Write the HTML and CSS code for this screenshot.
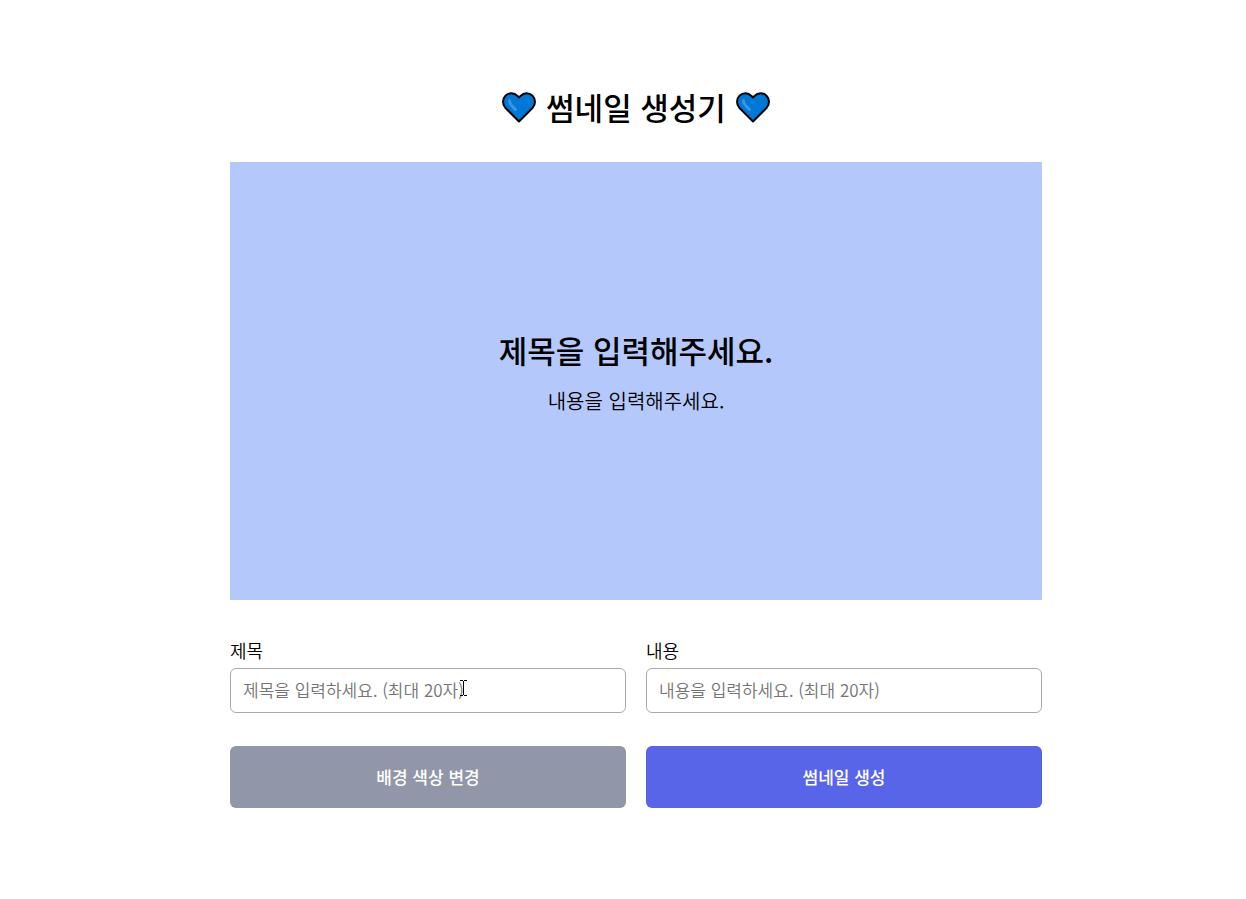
FILE: index.html
```html
<!DOCTYPE html>
<html lang="ko">
<head>
  <meta charset="UTF-8">
  <meta name="viewport" content="width=device-width, initial-scale=1.0">
  <title>썸네일 생성기</title>
  <link rel="stylesheet" href="styles.css">
</head>
<body>
  <main class="container">
    <h1 class="page-title">
      <svg class="heart" viewBox="0 0 34 31" aria-hidden="true">
        <path d="M17 29.500 L3.500 16 C.200 12.500 .200 7 3.500 3.700 C7 .300 12 .400 15.500 4 L17 5.500 L18.500 4 C22 .400 27 .300 30.500 3.700 C33.800 7 33.800 12.500 30.500 16 Z" fill="#0078d7" stroke="#000" stroke-width="2" stroke-linejoin="round"/>
        <path d="M7.500 8.500 C7.500 12 10 14.500 13.500 17.500" fill="none" stroke="#3a96dd" stroke-width="3" stroke-linecap="round"/>
      </svg>
      <span>썸네일 생성기</span>
      <svg class="heart" viewBox="0 0 34 31" aria-hidden="true">
        <path d="M17 29.500 L3.500 16 C.200 12.500 .200 7 3.500 3.700 C7 .300 12 .400 15.500 4 L17 5.500 L18.500 4 C22 .400 27 .300 30.500 3.700 C33.800 7 33.800 12.500 30.500 16 Z" fill="#0078d7" stroke="#000" stroke-width="2" stroke-linejoin="round"/>
        <path d="M7.500 8.500 C7.500 12 10 14.500 13.500 17.500" fill="none" stroke="#3a96dd" stroke-width="3" stroke-linecap="round"/>
      </svg>
    </h1>

    <!-- Thumbnail preview -->
    <section class="thumbnail" id="thumbnail">
      <h2 class="thumbnail-title" id="thumbnailTitle">제목을 입력해주세요.</h2>
      <p class="thumbnail-content" id="thumbnailContent">내용을 입력해주세요.</p>
    </section>

    <form class="form">
      <div class="field">
        <label for="titleInput">제목</label>
        <input type="text" id="titleInput" maxlength="20" placeholder="제목을 입력하세요. (최대 20자)">
        <svg class="text-cursor" viewBox="0 0 7 16" aria-hidden="true">
          <path d="M0 .500 H3 M4 .500 H7 M3.500 1 V15 M0 15.500 H3 M4 15.500 H7" fill="none" stroke="#000"/>
        </svg>
      </div>
      <div class="field">
        <label for="contentInput">내용</label>
        <input type="text" id="contentInput" maxlength="20" placeholder="내용을 입력하세요. (최대 20자)">
      </div>
      <button type="button" class="btn btn-color">배경 색상 변경</button>
      <button type="button" class="btn btn-create">썸네일 생성</button>
    </form>
  </main>
</body>
</html>
```
FILE: styles.css
```css
* {
  box-sizing: border-box;
}

body {
  margin: 0;
  padding: 83px 0 83px 26px;
  background-color: #fff;
  color: #000;
  font-family: "Noto Sans CJK KR", sans-serif;
  font-weight: 350;
}

.container {
  width: 66.6%;
  min-width: 320px;
  max-width: 812px;
  margin: 0 auto;
}

.page-title {
  display: flex;
  justify-content: center;
  align-items: center;
  gap: 10px;
  margin: 0 0 31px;
  font-size: 31px;
  font-weight: 500;
  line-height: 48px;
}

.heart {
  width: 34px;
  height: 31px;
}

.thumbnail {
  display: flex;
  flex-direction: column;
  justify-content: center;
  align-items: center;
  gap: 13px;
  min-height: 438px;
  padding: 20px 20px 42px;
  background-color: #b5c8fc;
}

.thumbnail-title {
  margin: 0;
  font-size: 31px;
  font-weight: 500;
  line-height: 48px;
}

.thumbnail-content {
  margin: 0;
  font-size: 20px;
  line-height: 28px;
}

.form {
  display: grid;
  grid-template-columns: 1fr 1fr;
  column-gap: 20px;
  row-gap: 33px;
  margin-top: 36px;
}

.field {
  position: relative;
  display: flex;
  flex-direction: column;
  gap: 4px;
}

.field label {
  font-size: 18px;
  line-height: 28px;
}

.field input {
  width: 100%;
  height: 45px;
  padding: 0 12px 2px;
  border: 1px solid #aaa;
  border-radius: 6px;
  background-color: #fff;
  font-family: inherit;
  font-size: 17px;
  font-weight: inherit;
}

.field input::placeholder {
  color: #757575;
}

/* I-beam over the title input */
.text-cursor {
  position: absolute;
  top: 44px;
  left: 230px;
  width: 7px;
  height: 16px;
  pointer-events: none;
}

.btn {
  height: 62px;
  padding: 0 12px 2px;
  border: none;
  border-radius: 6px;
  color: #fff;
  font-family: inherit;
  font-size: 17px;
  font-weight: 500;
  cursor: pointer;
}

.btn-color {
  background-color: #9197a8;
}

.btn-create {
  background-color: #5865e9;
}
```
